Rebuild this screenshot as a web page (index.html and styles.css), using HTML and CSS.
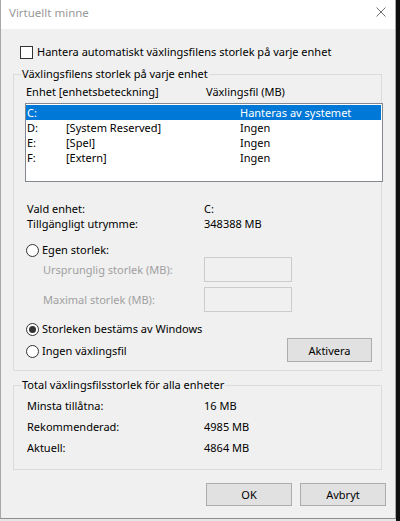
FILE: index.html
```html
<!DOCTYPE html>
<html lang="sv">
<head>
<meta charset="utf-8">
<title>Virtuellt minne</title>
<link rel="stylesheet" href="styles.css">
</head>
<body>
<div class="screen">
  <div class="window">
    <div class="titlebar">
      <span class="title">Virtuellt minne</span>
      <svg class="close" width="10" height="10" viewBox="0 0 10 10" aria-hidden="true"><path d="M0.5 0.5L9.5 9.5M9.5 0.5L0.5 9.5" stroke="#707070" stroke-width="1" fill="none"/></svg>
    </div>
    <div class="content">
      <div class="check-row"><span class="checkbox"></span><span>Hantera automatiskt växlingsfilens storlek på varje enhet</span></div>

      <fieldset class="group group-drives">
        <legend>Växlingsfilens storlek på varje enhet</legend>
        <div class="list-head"><span class="col-drive">Enhet [enhetsbeteckning]</span><span>Växlingsfil (MB)</span></div>
        <div class="listbox">
          <div class="row selected"><span class="c-letter">C:</span><span class="c-label"></span><span>Hanteras av systemet</span></div>
          <div class="row"><span class="c-letter">D:</span><span class="c-label">[System Reserved]</span><span>Ingen</span></div>
          <div class="row"><span class="c-letter">E:</span><span class="c-label">[Spel]</span><span>Ingen</span></div>
          <div class="row"><span class="c-letter">F:</span><span class="c-label">[Extern]</span><span>Ingen</span></div>
        </div>
        <div class="info">
          <div class="kv"><span class="k">Vald enhet:</span><span>C:</span></div>
          <div class="kv"><span class="k">Tillgängligt utrymme:</span><span>348388 MB</span></div>
        </div>
        <div class="radio-row r-custom"><span class="radio"></span><span>Egen storlek:</span></div>
        <div class="size-row"><span class="size-label">Ursprunglig storlek (MB):</span><span class="textbox"></span></div>
        <div class="size-row second"><span class="size-label">Maximal storlek (MB):</span><span class="textbox"></span></div>
        <div class="radio-row r-windows"><span class="radio checked"></span><span>Storleken bestäms av Windows</span></div>
        <div class="last-row">
          <div class="radio-row r-none"><span class="radio"></span><span>Ingen växlingsfil</span></div>
          <button class="btn btn-set">Aktivera</button>
        </div>
      </fieldset>

      <fieldset class="group group-total">
        <legend>Total växlingsfilsstorlek för alla enheter</legend>
        <div class="totals">
          <div class="kv tall"><span class="k">Minsta tillåtna:</span><span>16 MB</span></div>
          <div class="kv tall"><span class="k">Rekommenderad:</span><span>4985 MB</span></div>
          <div class="kv tall"><span class="k">Aktuell:</span><span>4864 MB</span></div>
        </div>
      </fieldset>

      <div class="actions">
        <button class="btn btn-dlg">OK</button>
        <button class="btn btn-dlg">Avbryt</button>
      </div>
    </div>
  </div>
  <div class="edge"></div>
</div>
</body>
</html>
```
FILE: styles.css
```css
html, body {
  margin: 0;
  padding: 0;
}
body {
  background: #e6e6e6;
  font-family: "Noto Sans", "Open Sans", sans-serif;
  font-size: 11px;
  color: #000;
  width: 400px;
  height: 521px;
  overflow: hidden;
}
.screen {
  display: flex;
  height: 521px;
}
.window {
  width: 396px;
  height: 519px;
  box-sizing: border-box;
  border-left: 1px solid #a8a8a8;
  border-right: 1px solid #a8a8a8;
  border-bottom: 1px solid #8e8e8e;
  background: #f0f0f0;
  display: flex;
  flex-direction: column;
}
.edge {
  flex: 1;
  height: 521px;
  background: #101010;
}
.titlebar {
  height: 29px;
  background: #fff;
  display: flex;
  align-items: flex-start;
  flex-shrink: 0;
}
.title {
  padding: 5px 0 0 8px;
  line-height: 15px;
  font-size: 11.5px;
  color: #999;
}
.close {
  margin: 7px 9px 0 auto;
}
.content {
  flex: 1;
  display: flex;
  flex-direction: column;
}
.check-row {
  display: flex;
  align-items: flex-start;
  margin-top: 15px;
  padding-left: 19px;
  line-height: 15px;
}
.checkbox {
  width: 13px;
  height: 13px;
  box-sizing: border-box;
  border: 1px solid #333;
  background: #fff;
  margin: 2px 4px 0 0;
}
.group {
  margin: 0 0 0 12px;
  width: 369px;
  box-sizing: border-box;
  border: 1px solid #dcdcdc;
  padding: 0;
  min-width: 0;
}
.group legend {
  margin-left: 7px;
  padding: 0 1px;
  line-height: 16px;
}
.group-drives {
  margin-top: 7px;
  padding-bottom: 8px;
}
.list-head {
  display: flex;
  margin-top: 2px;
  padding-left: 12px;
  line-height: 15px;
}
.col-drive {
  width: 180px;
}
.listbox {
  margin: 4px 0 0 11px;
  width: 358px;
  height: 79px;
  box-sizing: border-box;
  border: 1px solid #828790;
  background: #fff;
  padding-top: 1px;
}
.row {
  display: flex;
  height: 15px;
  line-height: 15px;
  padding-left: 1px;
  margin-right: 1px;
}
.row.selected {
  background: #0078d7;
  color: #fff;
}
.c-letter {
  width: 39px;
}
.c-label {
  width: 174px;
}
.info {
  margin-top: 19px;
  padding-left: 13px;
}
.kv {
  display: flex;
  line-height: 15px;
}
.k {
  width: 177px;
}
.radio-row {
  display: flex;
  align-items: flex-start;
  line-height: 15px;
}
.radio {
  width: 13px;
  height: 13px;
  box-sizing: border-box;
  border: 1px solid #333;
  border-radius: 50%;
  background: #fff;
  margin: 2px 3px 0 0;
  display: flex;
  align-items: center;
  justify-content: center;
}
.radio.checked::after {
  content: "";
  width: 7px;
  height: 7px;
  border-radius: 50%;
  background: #333;
}
.r-custom {
  margin-top: 11px;
  padding-left: 12px;
}
.size-row {
  display: flex;
  align-items: center;
  height: 25px;
  padding-left: 29px;
  color: #a0a0a0;
}
.size-row.second {
  margin-top: 5px;
}
.size-label {
  width: 161px;
}
.textbox {
  width: 88px;
  height: 25px;
  box-sizing: border-box;
  border: 1px solid #ccc;
  background: #f0f0f0;
}
.r-windows {
  margin-top: 9px;
  padding-left: 12px;
}
.last-row {
  display: flex;
  align-items: center;
  justify-content: space-between;
  margin-top: 2px;
  padding: 0 9px 0 12px;
  height: 24px;
}
.btn {
  font-family: inherit;
  font-size: 11px;
  color: #000;
  background: #e1e1e1;
  border: 1px solid #adadad;
  padding: 0;
  margin: 0;
  box-sizing: border-box;
}
.btn-set {
  width: 85px;
  height: 24px;
}
.group-total {
  margin-top: 6px;
  padding-bottom: 11px;
}
.totals {
  margin-top: 2px;
  padding-left: 13px;
}
.kv.tall {
  line-height: 21px;
}
.actions {
  display: flex;
  justify-content: flex-end;
  gap: 8px;
  margin-top: 13px;
  padding-right: 9px;
}
.btn-dlg {
  width: 86px;
  height: 23px;
}
```
